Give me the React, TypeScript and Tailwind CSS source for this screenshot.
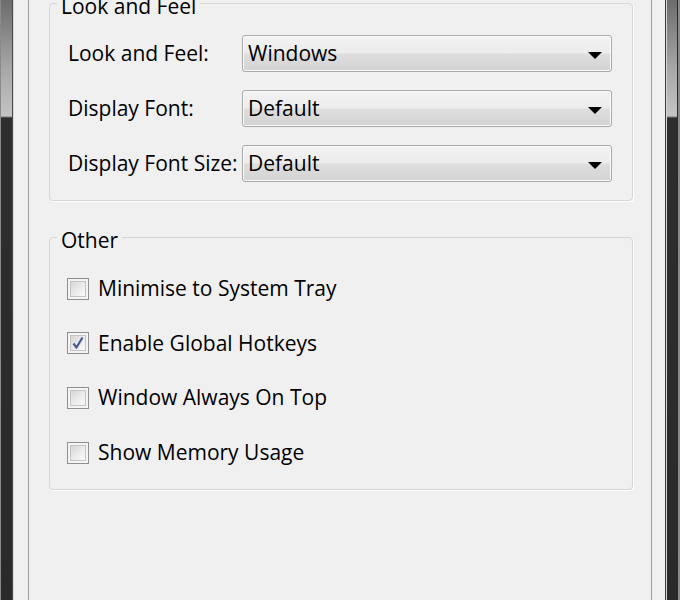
const font = "font-['Open_Sans',_'Noto_Sans',_sans-serif]";

function ComboBox({ value }: { value: string }) {
  return (
    <div className="flex h-[37px] w-[370px] items-center justify-between rounded-[3px] border border-[#a9a9a9] bg-[linear-gradient(to_bottom,#f3f3f3_0%,#ececec_48%,#dedede_52%,#d3d3d3_100%)] pl-[5px] pr-[9px] shadow-[inset_0_0_0_1px_#fbfbfb]">
      <span className="text-[21px] leading-none text-black">{value}</span>
      <svg width="14" height="8" viewBox="0 0 14 8" className="mt-[4px]">
        <polygon points="0,0 14,0 7,7" fill="#000" />
      </svg>
    </div>
  );
}

function CheckBox({ label, checked = false }: { label: string; checked?: boolean }) {
  return (
    <div className="flex h-[37px] items-center gap-[9px]">
      <div className="flex h-[22px] w-[22px] items-center justify-center border border-[#8e8f8f] bg-[#f4f4f4]">
        <div className="flex h-[16px] w-[16px] items-center justify-center border border-[#c4c4c4] bg-[linear-gradient(135deg,#d6d6d6_0%,#ececec_55%,#fbfbfb_100%)]">
          {checked && (
            <svg width="14" height="14" viewBox="0 0 14 14">
              <path d="M2.5 7.5 L5.5 11.5 L11.5 1.5" stroke="#4a5a96" strokeWidth="2.2" fill="none" strokeLinejoin="round" />
            </svg>
          )}
        </div>
      </div>
      <span className="text-[21px] leading-none text-black">{label}</span>
    </div>
  );
}

function Group({ title, children, className = '' }: { title: string; children: React.ReactNode; className?: string }) {
  return (
    <fieldset className={`rounded-[4px] border border-[#d6d6d6] shadow-[1px_1px_0_#ffffff] ${className}`}>
      <legend className="ml-[7px] px-[4px] pt-[5px] text-[21px] leading-[20px] text-black">{title}</legend>
      {children}
    </fieldset>
  );
}

export default function App() {
  const settings = [
    { label: 'Look and Feel:', value: 'Windows' },
    { label: 'Display Font:', value: 'Default' },
    { label: 'Display Font Size:', value: 'Default' },
  ];

  return (
    <div className={`flex h-[600px] w-[680px] overflow-hidden bg-[#f0f0f0] ${font}`}>
      {/* left window frame */}
      <div className="w-[1px] bg-[#8a8a8a]" />
      <div className="w-[11px] bg-[linear-gradient(to_bottom,#6c6c6c_0px,#a8a8a8_70px,#c4c4c4_116px,#2e2e2e_118px,#2a2a2a_100%)]" />
      <div className="w-[1px] bg-[#4a4a4a]" />
      <div className="w-[1px] bg-[#d8d8d8]" />
      <div className="w-[14px] bg-[#f0f0f0]" />
      <div className="w-[1px] bg-[#9c9c9c]" />

      <main className="flex w-[622px] flex-col pl-[20px] pr-[18px]">
        <Group title="Look and Feel" className="mt-[-9px] pb-[18px]">
          <div className="flex flex-col gap-[18px] pl-[18px] pr-[19px] pt-[19px]">
            {settings.map((s) => (
              <div key={s.label} className="flex items-center">
                <span className="w-[174px] text-[21px] leading-none text-black">{s.label}</span>
                <ComboBox value={s.value} />
              </div>
            ))}
          </div>
        </Group>

        <Group title="Other" className="mt-[24px] pb-[18px]">
          <div className="flex flex-col gap-[17.7px] pl-[17px] pt-[20px]">
            <CheckBox label="Minimise to System Tray" />
            <CheckBox label="Enable Global Hotkeys" checked />
            <CheckBox label="Window Always On Top" />
            <CheckBox label="Show Memory Usage" />
          </div>
        </Group>
      </main>

      {/* right window frame */}
      <div className="w-[1px] bg-[#9c9c9c]" />
      <div className="w-[13px] bg-[#f0f0f0]" />
      <div className="w-[1px] bg-[#3a3a3a]" />
      <div className="w-[1px] bg-[#d8d8d8]" />
      <div className="w-[10px] bg-[linear-gradient(to_bottom,#6c6c6c_0px,#a8a8a8_70px,#c4c4c4_116px,#2e2e2e_118px,#2a2a2a_100%)]" />
      <div className="w-[1px] bg-[#2a2a2a]" />
      <div className="w-[2px] bg-[#8a8a8a]" />
    </div>
  );
}
